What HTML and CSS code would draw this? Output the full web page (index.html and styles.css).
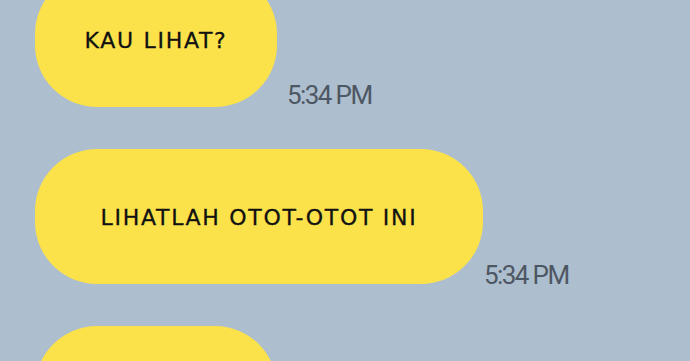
FILE: index.html
```html
<!DOCTYPE html>
<html lang="en">
<head>
  <meta charset="UTF-8">
  <meta name="viewport" content="width=device-width, initial-scale=1.0">
  <title>Chat</title>
  <link rel="stylesheet" href="styles.css">
</head>
<body>
  <!-- Chat thread -->
  <div class="chat">
    <div class="row row-first">
      <div class="bubble bubble-short">
        <p>KAU LIHAT?</p>
      </div>
      <span class="time">5:34 PM</span>
    </div>

    <div class="row">
      <div class="bubble bubble-long">
        <p>LIHATLAH OTOT-OTOT INI</p>
      </div>
      <span class="time time-tight">5:34 PM</span>
    </div>

    <div class="row">
      <div class="bubble bubble-short"></div>
    </div>
  </div>
</body>
</html>
```

FILE: styles.css
```css
* {
  margin: 0;
  padding: 0;
  box-sizing: border-box;
}

body {
  background-color: #adbfcf;
  height: 361px;
  overflow: hidden;
  font-family: "DejaVu Sans", sans-serif;
}

/* Thread */
.chat {
  display: flex;
  flex-direction: column;
  gap: 42px;
  padding-left: 35px;
}

.row {
  display: flex;
  align-items: flex-end;
}

.row-first {
  margin-top: -28px;
}

/* Bubbles */
.bubble {
  height: 135px;
  background-color: #fbe24a;
  border-radius: 62px;
  display: flex;
  align-items: center;
  justify-content: center;
  color: #111;
  font-size: 22px;
  letter-spacing: 1.7px;
  -webkit-text-stroke: 0.3px #111;
}

.bubble p {
  margin-top: 2px;
}

.bubble-short {
  width: 242px;
}

.bubble-long {
  width: 448px;
}

/* Timestamps */
.time {
  font-family: Roboto, sans-serif;
  font-weight: 400;
  font-size: 26px;
  line-height: 26px;
  letter-spacing: -1.6px;
  color: #4d5763;
  margin-left: 10px;
  margin-bottom: -1px;
}

.time-tight {
  margin-left: 1px;
  margin-bottom: -4px;
}
```
